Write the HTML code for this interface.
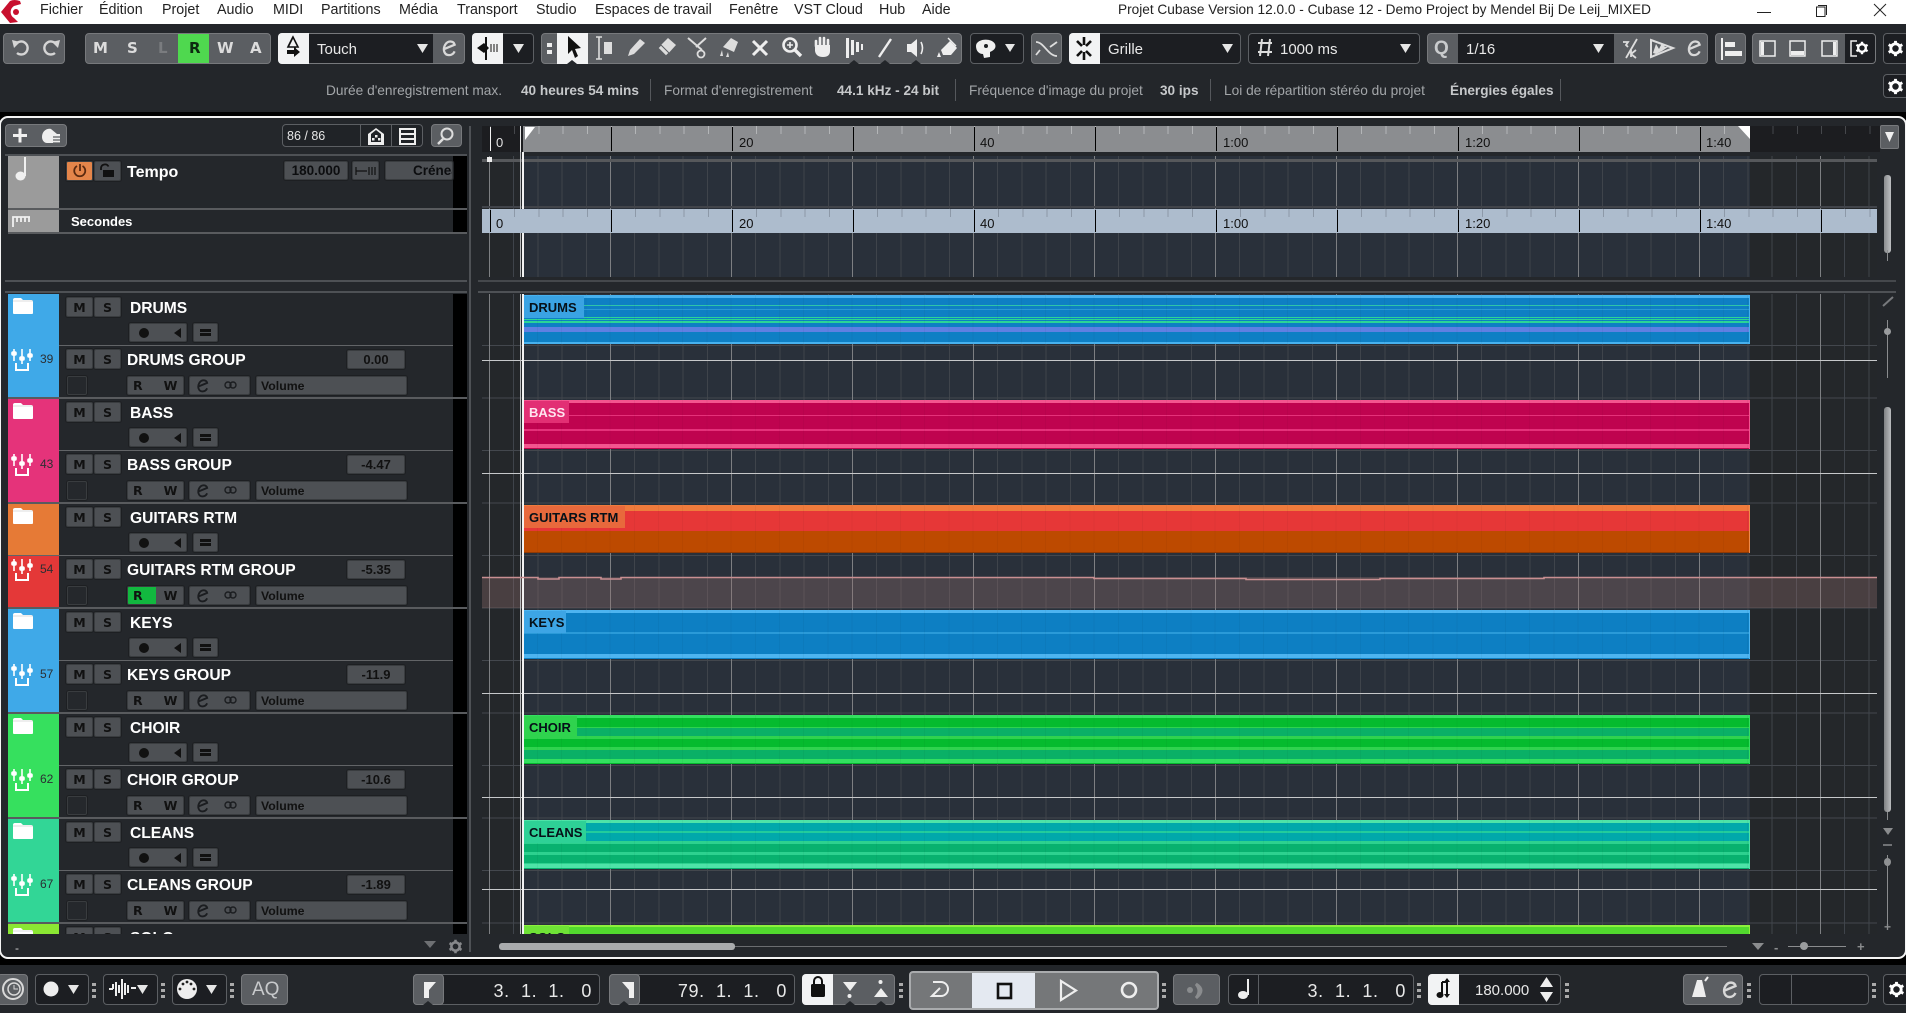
<!DOCTYPE html>
<html lang="fr"><head><meta charset="utf-8"><title>Cubase 12</title>
<style>
*{box-sizing:border-box}
html,body{margin:0;padding:0;width:1906px;height:1013px;overflow:hidden;background:#000;font-family:"Liberation Sans",sans-serif}
.a,.t,.b,.d,.w,.g{position:absolute}
.t{white-space:nowrap;line-height:1}
.d{background:#1c1e22;border:1px solid #5c5f63;border-radius:4px}
.w{background:#5b5e62;border:1px solid #77797c;border-radius:4px}
.g{width:4px;height:3px;background:#aaa;box-shadow:0 6px #aaa,0 12px #aaa;top:983px}
.b{background:#4d5054;border:1px solid #393c3f;box-shadow:0 0 0 1px #1d1f22;border-radius:2px;color:#111;font-weight:700;display:flex;align-items:center;justify-content:center;font-size:12.3px}
.k{font-family:"DejaVu Sans",sans-serif;font-size:12.5px}
.mn{top:3px;font-size:14.3px;color:#222}
.tb{top:42px;font-size:15px;color:#e8e8e8}
.ms{top:41px;font-family:"DejaVu Sans",sans-serif;font-size:15px;font-weight:700;color:#dcdcdc}
.info{top:84px;font-size:13.7px;color:#a3a6a9}
.infb{top:84px;font-size:13.6px;color:#c6c8ca;font-weight:700}
.div{top:79px;width:1px;height:22px;background:#55585c}
.tr{position:absolute;left:0;width:470px;height:105px}
.st{position:absolute;left:8px;top:0;width:51px;height:103px}
.bk{position:absolute;left:453px;top:0;width:14px;height:103px;background:#000}
.l1{position:absolute;left:59px;top:51px;width:394px;height:1px;background:#626467}
.l2{position:absolute;left:8px;top:103px;width:459px;height:2px;background:#595b5e}
.nm{position:absolute;color:#fff;font-weight:700;font-size:15.6px;line-height:1;white-space:nowrap}
.n1{left:130px;top:7px}.n2{left:127px;top:59px}
.num{position:absolute;left:40px;top:59px;font-size:12px;line-height:1;color:#2c2f33}
.f{position:absolute;left:12px;top:2px;width:22px;height:20px}
.mx{position:absolute;left:10px;top:53px;width:24px;height:25px}
.rw{justify-content:flex-start;padding-left:5px;gap:21px}
.rc{justify-content:flex-start;padding-left:9px;gap:21px}
.rc span:first-child{width:10px;height:10px;border-radius:50%;background:#111}
.rc span:last-child{width:0;height:0;border:5px solid transparent;border-right:7px solid #111;margin-left:-1px}
.eq span{width:11px;height:7px;border-top:3px solid #111;border-bottom:3px solid #111}
.clip{position:absolute;left:523px;width:1227px;height:49px;overflow:hidden}
.clip i{position:absolute;left:14.4px;top:0;right:0;bottom:0;background:repeating-linear-gradient(90deg,rgba(0,0,0,.04) 0 1px,transparent 1px 24.2px)}
.clip b{position:absolute;left:0;top:1px;height:22px;padding-left:6px;font-size:13px;line-height:24px;color:#061018;white-space:nowrap}
.clip u{position:absolute;right:0;top:0;width:1px;height:100%}
.loc{font-size:18px;letter-spacing:.6px;color:#e8e8e8;white-space:pre;text-align:right}
svg.ov{position:absolute;left:0;top:0;z-index:5;pointer-events:none}
</style></head><body>

<svg width="0" height="0" style="position:absolute"><defs>
<symbol id="fold" viewBox="0 0 22 20"><path d="M1 4 Q1 2 3 2H9L11 4H19Q21 4 21 6V17Q21 18 20 18H2Q1 18 1 17Z" fill="#fff"/><path d="M1 5H21" stroke="#bbb" stroke-width=".6"/></symbol>
<symbol id="mix" viewBox="0 0 24 25"><g stroke="#fff" stroke-width="1.6" fill="#fff"><path d="M4 2V14M12 2V17M20 2V14" fill="none"/><rect x="2" y="5" width="4" height="3" rx="1"/><rect x="10" y="10" width="4" height="3" rx="1"/><rect x="18" y="7" width="4" height="3" rx="1"/><path d="M6 16V23H18V16" fill="none" stroke-width="2"/></g></symbol>
<symbol id="eic" viewBox="0 0 16 18"><path d="M2 10 L14 5 C13 1 7 0 4 5 C1 10 3 16 8 16 C11 16 13 14 14 12" fill="none" stroke="#d8d8d8" stroke-width="2.4"/></symbol>
<symbol id="eid" viewBox="0 0 16 18"><path d="M2 10 L14 5 C13 1 7 0 4 5 C1 10 3 16 8 16 C11 16 13 14 14 12" fill="none" stroke="#1b1d20" stroke-width="2.4"/></symbol>
<symbol id="gear" viewBox="0 0 20 20"><circle cx="10" cy="10" r="5.5" fill="none" stroke="#fff" stroke-width="3.4"/><path d="M10 1V5M10 15V19M2 5.5 5.5 7.5M14.5 12.5 18 14.5M2 14.5 5.5 12.5M14.5 7.5 18 5.5" stroke="#fff" stroke-width="3.4"/></symbol>
</defs></svg>

<!-- title bar -->
<div class="a" style="left:0;top:0;width:1906px;height:24px;background:#fff"></div>
<div class="t mn" style="left:40px">Fichier</div>
<div class="t mn" style="left:99px">Édition</div>
<div class="t mn" style="left:162px">Projet</div>
<div class="t mn" style="left:217px">Audio</div>
<div class="t mn" style="left:273px">MIDI</div>
<div class="t mn" style="left:321px">Partitions</div>
<div class="t mn" style="left:399px">Média</div>
<div class="t mn" style="left:457px">Transport</div>
<div class="t mn" style="left:536px">Studio</div>
<div class="t mn" style="left:595px">Espaces de travail</div>
<div class="t mn" style="left:729px">Fenêtre</div>
<div class="t mn" style="left:794px">VST Cloud</div>
<div class="t mn" style="left:879px">Hub</div>
<div class="t mn" style="left:922px">Aide</div>
<div class="t" style="left:1118px;top:3px;font-size:13.65px;color:#222">Projet Cubase Version 12.0.0 - Cubase 12 - Demo Project by Mendel Bij De Leij_MIXED</div>

<!-- top toolbar -->
<div class="a" style="left:0;top:24px;width:1906px;height:88px;background:#23262a"></div>
<div class="w" style="left:3px;top:33px;width:62px;height:31px"></div>
<div class="w" style="left:85px;top:33px;width:186px;height:31px"></div>
<div class="a" style="left:178px;top:34px;width:31px;height:29px;background:#4fd84f"></div>
<div class="t ms" style="left:93px">M</div>
<div class="t ms" style="left:127px">S</div>
<div class="t ms" style="left:158px;color:#7a7c7f">L</div>
<div class="t ms" style="left:189px;color:#0c2a10">R</div>
<div class="t ms" style="left:217px">W</div>
<div class="t ms" style="left:250px">A</div>

<div class="w" style="left:278px;top:33px;width:187px;height:31px"></div>
<div class="a" style="left:278px;top:33px;width:31px;height:31px;background:#f2f3f4;border-radius:4px 0 0 4px"></div>
<div class="a" style="left:309px;top:34px;width:124px;height:29px;background:#1c1e22"></div>
<div class="t tb" style="left:317px">Touch</div>

<div class="d" style="left:472px;top:33px;width:62px;height:31px"></div>
<div class="a" style="left:472px;top:33px;width:31px;height:31px;background:#f2f3f4;border-radius:4px 0 0 4px"></div>

<div class="w" style="left:541px;top:33px;width:421px;height:31px"></div>
<div class="a" style="left:557px;top:33px;width:31px;height:31px;background:#f2f3f4"></div>

<div class="d" style="left:970px;top:33px;width:54px;height:31px"></div>
<div class="w" style="left:1031px;top:33px;width:31px;height:31px"></div>
<div class="d" style="left:1069px;top:33px;width:172px;height:31px"></div>
<div class="a" style="left:1069px;top:33px;width:31px;height:31px;background:#f2f3f4;border-radius:4px 0 0 4px"></div>
<div class="t tb" style="left:1108px">Grille</div>
<div class="d" style="left:1248px;top:33px;width:172px;height:31px"></div>
<div class="t tb" style="left:1280px">1000 ms</div>
<div class="w" style="left:1427px;top:33px;width:281px;height:31px"></div>
<div class="a" style="left:1458px;top:34px;width:156px;height:29px;background:#1c1e22"></div>
<div class="t" style="left:1434px;top:39px;font-size:19px;font-weight:700;color:#c9cbcd">Q</div>
<div class="t tb" style="left:1466px">1/16</div>
<div class="w" style="left:1715px;top:33px;width:31px;height:31px"></div>
<div class="w" style="left:1752px;top:33px;width:124px;height:31px"></div>
<div class="a" style="left:1845px;top:34px;width:30px;height:29px;background:#1c1e22;border-radius:0 3px 3px 0"></div>
<div class="d" style="left:1883px;top:33px;width:26px;height:31px"></div>
<div class="d" style="left:1883px;top:74px;width:26px;height:24px"></div>

<!-- info line -->
<div class="t info" style="left:326px">Durée d'enregistrement max.</div>
<div class="t infb" style="left:521px">40 heures 54 mins</div>
<div class="a div" style="left:650px"></div>
<div class="t info" style="left:664px">Format d'enregistrement</div>
<div class="t infb" style="left:837px">44.1 kHz - 24 bit</div>
<div class="a div" style="left:955px"></div>
<div class="t info" style="left:969px">Fréquence d'image du projet</div>
<div class="t infb" style="left:1160px">30 ips</div>
<div class="a div" style="left:1210px"></div>
<div class="t info" style="left:1224px">Loi de répartition stéréo du projet</div>
<div class="t infb" style="left:1450px">Énergies égales</div>
<div class="a div" style="left:1560px"></div>

<!-- main panel -->
<div class="a" style="left:-1px;top:116px;width:1908px;height:843px;background:#24272b;border:2px solid #f4f4f4;border-radius:9px"></div>

<!-- left header -->
<div class="w" style="left:5px;top:124px;width:62px;height:23px"></div>
<div class="d" style="left:282px;top:124px;width:141px;height:23px;background:#202327"></div>
<div class="a" style="left:360px;top:125px;width:1px;height:21px;background:#5c5f63"></div>
<div class="a" style="left:391px;top:125px;width:1px;height:21px;background:#5c5f63"></div>
<div class="t" style="left:287px;top:130px;font-size:12.5px;color:#e6e6e6">86 / 86</div>
<div class="w" style="left:431px;top:124px;width:31px;height:23px"></div>
<div class="a" style="left:5px;top:154px;width:462px;height:2px;background:#4e5155"></div>
<div class="a" style="left:469px;top:126px;width:2px;height:826px;background:#4e5155"></div>

<!-- tempo rows -->
<div class="a" style="left:8px;top:156px;width:51px;height:52px;background:#9b9b9b"></div>
<div class="a" style="left:8px;top:210px;width:51px;height:23px;background:#9b9b9b"></div>
<div class="a" style="left:453px;top:156px;width:14px;height:52px;background:#000"></div>
<div class="a" style="left:453px;top:210px;width:14px;height:22px;background:#000"></div>
<div class="a" style="left:8px;top:208px;width:459px;height:2px;background:#595b5e"></div>
<div class="a" style="left:8px;top:232px;width:459px;height:2px;background:#595b5e"></div>
<div class="b" style="left:66px;top:161px;width:27px;height:20px;background:#e4854a"></div>
<div class="b" style="left:94px;top:161px;width:27px;height:20px"></div>
<div class="t" style="left:127px;top:165px;font-size:16px;font-weight:700;color:#fff">Tempo</div>
<div class="b" style="left:284px;top:161px;width:64px;height:19px;font-size:13.5px;color:#0c0d0f">180.000</div>
<div class="b" style="left:352px;top:161px;width:27px;height:19px"></div>
<div class="b" style="left:385px;top:161px;width:68px;height:19px;overflow:hidden;justify-content:flex-start;padding-left:27px;font-size:13.5px;color:#0c0d0f">Créneau</div>
<div class="t" style="left:71px;top:215px;font-size:13px;font-weight:700;color:#fff">Secondes</div>
<div class="a" style="left:5px;top:280px;width:462px;height:2px;background:#4e5155"></div>
<div class="a" style="left:5px;top:291px;width:462px;height:2px;background:#4e5155"></div>
<div class="a" style="left:478px;top:280px;width:1418px;height:2px;background:#45484c"></div>
<div class="a" style="left:478px;top:291px;width:1418px;height:2px;background:#4e5155"></div>

<!-- track list -->
<div class="a" style="left:0;top:294px;width:470px;height:640px;overflow:hidden">
<div class="tr" style="top:0"><div class="st" style="background:#3fa9e8"></div><div class="bk"></div><div class="l1"></div><div class="l2"></div>
<svg class="f"><use href="#fold"/></svg><svg class="mx"><use href="#mix"/></svg><div class="num">39</div>
<div class="b k" style="left:66px;top:3px;width:27px;height:20px">M</div><div class="b k" style="left:94px;top:3px;width:27px;height:20px">S</div>
<div class="nm n1">DRUMS</div>
<div class="b rc" style="left:129px;top:29px;width:58px;height:19px"><span></span><span></span></div>
<div class="b eq" style="left:193px;top:29px;width:25px;height:19px"><span></span></div>
<div class="b k" style="left:66px;top:55px;width:27px;height:20px">M</div><div class="b k" style="left:94px;top:55px;width:27px;height:20px">S</div>
<div class="nm n2">DRUMS GROUP</div>
<div class="b" style="left:347px;top:56px;width:58px;height:19px;font-size:13px">0.00</div>
<div class="b" style="left:67px;top:82px;width:20px;height:19px;background:#25282c"></div>
<div class="b k rw" style="left:127px;top:82px;width:57px;height:19px">R<span>W</span></div>
<div class="b" style="left:189px;top:82px;width:61px;height:19px"></div>
<div class="b" style="left:256px;top:82px;width:151px;height:19px;justify-content:flex-start;padding-left:4px">Volume</div>
</div>

<div class="tr" style="top:105px"><div class="st" style="background:#e5337a"></div><div class="bk"></div><div class="l1"></div><div class="l2"></div>
<svg class="f"><use href="#fold"/></svg><svg class="mx"><use href="#mix"/></svg><div class="num">43</div>
<div class="b k" style="left:66px;top:3px;width:27px;height:20px">M</div><div class="b k" style="left:94px;top:3px;width:27px;height:20px">S</div>
<div class="nm n1">BASS</div>
<div class="b rc" style="left:129px;top:29px;width:58px;height:19px"><span></span><span></span></div>
<div class="b eq" style="left:193px;top:29px;width:25px;height:19px"><span></span></div>
<div class="b k" style="left:66px;top:55px;width:27px;height:20px">M</div><div class="b k" style="left:94px;top:55px;width:27px;height:20px">S</div>
<div class="nm n2">BASS GROUP</div>
<div class="b" style="left:347px;top:56px;width:58px;height:19px;font-size:13px">-4.47</div>
<div class="b" style="left:67px;top:82px;width:20px;height:19px;background:#25282c"></div>
<div class="b k rw" style="left:127px;top:82px;width:57px;height:19px">R<span>W</span></div>
<div class="b" style="left:189px;top:82px;width:61px;height:19px"></div>
<div class="b" style="left:256px;top:82px;width:151px;height:19px;justify-content:flex-start;padding-left:4px">Volume</div>
</div>

<div class="tr" style="top:210px"><div class="st" style="background:linear-gradient(#e67a36 0 51px,#e43838 51px)"></div><div class="bk"></div><div class="l1" style="left:8px;width:445px"></div><div class="l2"></div>
<svg class="f"><use href="#fold"/></svg><svg class="mx"><use href="#mix"/></svg><div class="num">54</div>
<div class="b k" style="left:66px;top:3px;width:27px;height:20px">M</div><div class="b k" style="left:94px;top:3px;width:27px;height:20px">S</div>
<div class="nm n1">GUITARS RTM</div>
<div class="b rc" style="left:129px;top:29px;width:58px;height:19px"><span></span><span></span></div>
<div class="b eq" style="left:193px;top:29px;width:25px;height:19px"><span></span></div>
<div class="b k" style="left:66px;top:55px;width:27px;height:20px">M</div><div class="b k" style="left:94px;top:55px;width:27px;height:20px">S</div>
<div class="nm n2">GUITARS RTM GROUP</div>
<div class="b" style="left:347px;top:56px;width:58px;height:19px;font-size:13px">-5.35</div>
<div class="b" style="left:67px;top:82px;width:20px;height:19px;background:#25282c"></div>
<div class="b k rw" style="left:127px;top:82px;width:57px;height:19px;background:linear-gradient(90deg,#12b83f 0 28px,#4d5054 28px)">R<span>W</span></div>
<div class="b" style="left:189px;top:82px;width:61px;height:19px"></div>
<div class="b" style="left:256px;top:82px;width:151px;height:19px;justify-content:flex-start;padding-left:4px">Volume</div>
</div>

<div class="tr" style="top:315px"><div class="st" style="background:#3fa9e8"></div><div class="bk"></div><div class="l1"></div><div class="l2"></div>
<svg class="f"><use href="#fold"/></svg><svg class="mx"><use href="#mix"/></svg><div class="num">57</div>
<div class="b k" style="left:66px;top:3px;width:27px;height:20px">M</div><div class="b k" style="left:94px;top:3px;width:27px;height:20px">S</div>
<div class="nm n1">KEYS</div>
<div class="b rc" style="left:129px;top:29px;width:58px;height:19px"><span></span><span></span></div>
<div class="b eq" style="left:193px;top:29px;width:25px;height:19px"><span></span></div>
<div class="b k" style="left:66px;top:55px;width:27px;height:20px">M</div><div class="b k" style="left:94px;top:55px;width:27px;height:20px">S</div>
<div class="nm n2">KEYS GROUP</div>
<div class="b" style="left:347px;top:56px;width:58px;height:19px;font-size:13px">-11.9</div>
<div class="b" style="left:67px;top:82px;width:20px;height:19px;background:#25282c"></div>
<div class="b k rw" style="left:127px;top:82px;width:57px;height:19px">R<span>W</span></div>
<div class="b" style="left:189px;top:82px;width:61px;height:19px"></div>
<div class="b" style="left:256px;top:82px;width:151px;height:19px;justify-content:flex-start;padding-left:4px">Volume</div>
</div>

<div class="tr" style="top:420px"><div class="st" style="background:#36e05e"></div><div class="bk"></div><div class="l1"></div><div class="l2"></div>
<svg class="f"><use href="#fold"/></svg><svg class="mx"><use href="#mix"/></svg><div class="num">62</div>
<div class="b k" style="left:66px;top:3px;width:27px;height:20px">M</div><div class="b k" style="left:94px;top:3px;width:27px;height:20px">S</div>
<div class="nm n1">CHOIR</div>
<div class="b rc" style="left:129px;top:29px;width:58px;height:19px"><span></span><span></span></div>
<div class="b eq" style="left:193px;top:29px;width:25px;height:19px"><span></span></div>
<div class="b k" style="left:66px;top:55px;width:27px;height:20px">M</div><div class="b k" style="left:94px;top:55px;width:27px;height:20px">S</div>
<div class="nm n2">CHOIR GROUP</div>
<div class="b" style="left:347px;top:56px;width:58px;height:19px;font-size:13px">-10.6</div>
<div class="b" style="left:67px;top:82px;width:20px;height:19px;background:#25282c"></div>
<div class="b k rw" style="left:127px;top:82px;width:57px;height:19px">R<span>W</span></div>
<div class="b" style="left:189px;top:82px;width:61px;height:19px"></div>
<div class="b" style="left:256px;top:82px;width:151px;height:19px;justify-content:flex-start;padding-left:4px">Volume</div>
</div>

<div class="tr" style="top:525px"><div class="st" style="background:#32d696"></div><div class="bk"></div><div class="l1"></div><div class="l2"></div>
<svg class="f"><use href="#fold"/></svg><svg class="mx"><use href="#mix"/></svg><div class="num">67</div>
<div class="b k" style="left:66px;top:3px;width:27px;height:20px">M</div><div class="b k" style="left:94px;top:3px;width:27px;height:20px">S</div>
<div class="nm n1">CLEANS</div>
<div class="b rc" style="left:129px;top:29px;width:58px;height:19px"><span></span><span></span></div>
<div class="b eq" style="left:193px;top:29px;width:25px;height:19px"><span></span></div>
<div class="b k" style="left:66px;top:55px;width:27px;height:20px">M</div><div class="b k" style="left:94px;top:55px;width:27px;height:20px">S</div>
<div class="nm n2">CLEANS GROUP</div>
<div class="b" style="left:347px;top:56px;width:58px;height:19px;font-size:13px">-1.89</div>
<div class="b" style="left:67px;top:82px;width:20px;height:19px;background:#25282c"></div>
<div class="b k rw" style="left:127px;top:82px;width:57px;height:19px">R<span>W</span></div>
<div class="b" style="left:189px;top:82px;width:61px;height:19px"></div>
<div class="b" style="left:256px;top:82px;width:151px;height:19px;justify-content:flex-start;padding-left:4px">Volume</div>
</div>

<div class="tr" style="top:630px"><div class="st" style="background:#8be733"></div><div class="bk"></div>
<svg class="f"><use href="#fold"/></svg>
<div class="b k" style="left:66px;top:3px;width:27px;height:20px">M</div><div class="b k" style="left:94px;top:3px;width:27px;height:20px">S</div>
<div class="nm n1">SOLO</div>
</div>
</div>
<div class="t" style="left:15px;top:942px;font-size:12px;color:#cfcfcf">-</div>

<!-- arrange upper -->
<div class="a" style="left:482px;top:156px;width:1395px;height:121px;background:#24272a;overflow:hidden">
  <div class="a" style="left:41px;top:0;width:1227px;height:121px;background:#29303a"></div>
  <div class="a" style="left:7px;top:0;width:1388px;height:121px;background:repeating-linear-gradient(90deg,#3f444b 0 1px,transparent 1px 24.2px)"></div>
  <div class="a" style="left:7px;top:0;width:1388px;height:121px;background:repeating-linear-gradient(90deg,#7d7f82 0 1px,transparent 1px 121px)"></div>
  <div class="a" style="left:0;top:3px;width:1395px;height:3px;background:#56585b"></div>
  <div class="a" style="left:0;top:50px;width:1395px;height:2px;background:#41444a"></div>
</div>
<div class="a" style="left:520px;top:152px;width:1px;height:125px;background:#b9bbbd"></div>
<div class="a" style="left:522px;top:152px;width:2px;height:125px;background:#f4f4f4"></div>
<div class="a" style="left:487px;top:157px;width:5px;height:5px;background:#eee"></div>

<!-- ruler top -->
<div class="a" style="left:482px;top:126px;width:1398px;height:26px;background:#1c1d20;overflow:hidden">
  <div class="a" style="left:8px;top:0;width:1390px;height:8px;background:repeating-linear-gradient(90deg,#45474b 0 1px,transparent 1px 24.2px)"></div>
  <div class="a" style="left:8px;top:1px;width:1390px;height:24px;background:repeating-linear-gradient(90deg,#f2f2f2 0 1px,transparent 1px 242px)"></div>
  <div class="a" style="left:41px;top:0;width:1227px;height:26px;background:#8b8d90;overflow:hidden">
    <div class="a" style="left:-33px;top:0;width:1300px;height:8px;background:repeating-linear-gradient(90deg,#b3b5b7 0 1px,transparent 1px 24.2px)"></div>
    <div class="a" style="left:-33px;top:1px;width:1300px;height:24px;background:repeating-linear-gradient(90deg,#000 0 1px,transparent 1px 121px)"></div>
  </div>
</div>
<div class="a" style="left:520px;top:126px;width:1px;height:26px;background:#e8e8e8"></div>
<div class="t" style="left:496px;top:136px;font-size:13px;color:#e2e2e2">0</div>
<div class="t" style="left:739px;top:136px;font-size:13px;color:#111">20</div>
<div class="t" style="left:980px;top:136px;font-size:13px;color:#111">40</div>
<div class="t" style="left:1223px;top:136px;font-size:13px;color:#111">1:00</div>
<div class="t" style="left:1465px;top:136px;font-size:13px;color:#111">1:20</div>
<div class="t" style="left:1706px;top:136px;font-size:13px;color:#111">1:40</div>
<div class="a" style="left:1880px;top:125px;width:19px;height:24px;background:#5b5e62;border:1px solid #77797c;border-radius:2px"></div>

<!-- ruler secondes -->
<div class="a" style="left:482px;top:209px;width:1395px;height:24px;background:#adbccd;overflow:hidden">
  <div class="a" style="left:8px;top:0;width:1387px;height:8px;background:repeating-linear-gradient(90deg,#8d99a8 0 1px,transparent 1px 24.2px)"></div>
  <div class="a" style="left:8px;top:1px;width:1387px;height:22px;background:repeating-linear-gradient(90deg,#000 0 1px,transparent 1px 121px)"></div>
</div>
<div class="t" style="left:496px;top:217px;font-size:13px;color:#111">0</div>
<div class="t" style="left:739px;top:217px;font-size:13px;color:#111">20</div>
<div class="t" style="left:980px;top:217px;font-size:13px;color:#111">40</div>
<div class="t" style="left:1223px;top:217px;font-size:13px;color:#111">1:00</div>
<div class="t" style="left:1465px;top:217px;font-size:13px;color:#111">1:20</div>
<div class="t" style="left:1706px;top:217px;font-size:13px;color:#111">1:40</div>

<!-- arrange lower -->
<div class="a" style="left:482px;top:294px;width:1395px;height:640px;background:#24272a;overflow:hidden">
  <div class="a" style="left:41px;top:0;width:1227px;height:640px;background:#29303a"></div>
  <div class="a" style="left:7px;top:0;width:1388px;height:640px;background:repeating-linear-gradient(90deg,#3f444b 0 1px,transparent 1px 24.2px)"></div>
  <div class="a" style="left:0;top:51px;width:1395px;height:590px;background:repeating-linear-gradient(180deg,#43474d 0 1px,transparent 1px 52.5px)"></div>
  <div class="a" style="left:7px;top:0;width:1388px;height:640px;background:repeating-linear-gradient(90deg,#7d7f82 0 1px,transparent 1px 121px)"></div>
  <div class="a" style="left:0;top:66px;width:1395px;height:1px;background:#c6c8ca"></div>
  <div class="a" style="left:0;top:179px;width:1395px;height:1px;background:#c6c8ca"></div>
  <div class="a" style="left:0;top:399px;width:1395px;height:1px;background:#c6c8ca"></div>
  <div class="a" style="left:0;top:503px;width:1395px;height:1px;background:#c6c8ca"></div>
  <div class="a" style="left:0;top:595px;width:1395px;height:1px;background:#c6c8ca"></div>
  <div class="a" style="left:0;top:283px;width:1395px;height:31px;background:rgba(150,112,112,.33)"></div>
</div>
<div class="a" style="left:520px;top:294px;width:1px;height:640px;background:#b9bbbd"></div>

<!-- clips -->
<div class="clip" style="top:295px;background:linear-gradient(#47b1ee 0 3px,#0e7fc4 3px 10px,#2fc4a8 10px 11px,#0e7fc4 11px 14px,#2b98d6 14px 15px,#0e7fc4 15px 22px,#2bd596 22px 23px,#0e7fc4 23px 24px,#2bd596 24px 25px,#0e7fc4 25px 26px,#2bd596 26px 28px,#0e7fc4 28px 32px,#5f80e2 32px 37px,#0e7fc4 37px 47px,#47b1ee 47px)"><i></i><b style="background:#3aa3e3;width:61px">DRUMS</b><u style="background:#47b1ee"></u></div>
<div class="clip" style="top:400px;background:linear-gradient(#f3558f 0 3px,#bf034f 3px 15px,#e5317a 15px 16px,#bf034f 16px 29px,#e5317a 29px 31px,#bf034f 31px 44px,#f3558f 44px 48px,#bf034f 48px)"><i></i><b style="background:#e22f74;color:#ffe6f0;width:46px">BASS</b><u style="background:#f3558f"></u></div>
<div class="clip" style="top:505px;height:48px;background:linear-gradient(#ef7b3c 0 6px,#e63737 6px 26px,#bd4a00 26px 47px,#8f3a05 47px)"><i></i><b style="background:#e8693c;width:102px">GUITARS RTM</b><u style="background:#f08a4c"></u></div>
<div class="clip" style="top:610px;background:linear-gradient(#4db4f0 0 3px,#0d7fc3 3px 22px,#2a9ad8 22px 24px,#0d7fc3 24px 44px,#4db4f0 44px 48px,#0d7fc3 48px)"><i></i><b style="background:#3da5e5;width:43px">KEYS</b><u style="background:#4db4f0"></u></div>
<div class="clip" style="top:715px;background:linear-gradient(#33e060 0 3px,#05bb2e 3px 12px,#2fd34e 12px 13px,#0ab066 13px 21px,#2fd34e 21px 24px,#05bb2e 24px 32px,#2fd34e 32px 35px,#0ab066 35px 44px,#33e060 44px 48px,#05bb2e 48px)"><i></i><b style="background:#2fd34e;width:54px">CHOIR</b><u style="background:#33e060"></u></div>
<div class="clip" style="top:820px;background:linear-gradient(#4ee3a8 0 3px,#01a8ab 3px 11px,#22cc9c 11px 13px,#01a8ab 13px 21px,#2dd18f 21px 24px,#08b16f 24px 32px,#2dd18f 32px 35px,#08b16f 35px 43px,#2dd18f 43px 44px,#4ee3a8 44px 48px,#08b16f 48px)"><i></i><b style="background:#2ed196;width:63px">CLEANS</b><u style="background:#4ee3a8"></u></div>
<div class="clip" style="top:925px;height:9px;background:linear-gradient(#8cf03c 0 2px,#52d92e 2px)"><b style="background:#6fe236;width:46px">SOLO</b><u style="background:#8cf03c"></u></div>
<div class="a" style="left:522px;top:294px;width:2px;height:640px;background:#f4f4f4"></div>

<!-- scrollbars -->
<div class="a" style="left:499px;top:946px;width:1228px;height:1px;background:#6b6d70"></div>
<div class="a" style="left:499px;top:943px;width:236px;height:7px;background:#a9abad;border-radius:3px"></div>
<div class="a" style="left:1884px;top:175px;width:7px;height:78px;background:linear-gradient(90deg,#8a8c8e,#bdbfc1);border-radius:3px"></div>
<div class="a" style="left:1887px;top:250px;width:1px;height:11px;background:#8a8c8e"></div>
<div class="a" style="left:1887px;top:320px;width:1px;height:58px;background:#8a8c8e"></div>
<div class="a" style="left:1884px;top:328px;width:7px;height:7px;background:#9a9c9e;border-radius:50%"></div>
<div class="a" style="left:1884px;top:407px;width:7px;height:405px;background:linear-gradient(90deg,#7f8183,#b9bbbd);border-radius:3px"></div>
<div class="a" style="left:1887px;top:812px;width:1px;height:8px;background:#8a8c8e"></div>
<div class="a" style="left:1887px;top:855px;width:1px;height:70px;background:#8a8c8e"></div>
<div class="a" style="left:1884px;top:858px;width:7px;height:8px;background:#8f9193;border-radius:50%"></div>
<div class="a" style="left:1788px;top:946px;width:58px;height:1px;background:#8a8c8e"></div>
<div class="a" style="left:1800px;top:942px;width:8px;height:8px;background:#9a9c9e;border-radius:50%"></div>
<div class="t" style="left:1774px;top:941px;font-size:13px;font-weight:700;color:#8a8c8e">-</div>
<div class="t" style="left:1857px;top:940px;font-size:13px;font-weight:700;color:#8a8c8e">+</div>
<div class="t" style="left:1884px;top:921px;font-size:12px;font-weight:700;color:#8a8c8e">+</div>

<!-- bottom toolbar -->
<div class="a" style="left:0;top:965px;width:1906px;height:48px;background:#23262a"></div>
<div class="w" style="left:-3px;top:974px;width:31px;height:31px"></div>
<div class="d" style="left:35px;top:974px;width:54px;height:31px"></div><div class="g" style="left:92px"></div>
<div class="d" style="left:103px;top:974px;width:55px;height:31px"></div><div class="g" style="left:161px"></div>
<div class="d" style="left:172px;top:974px;width:55px;height:31px"></div><div class="g" style="left:230px"></div>
<div class="w" style="left:241px;top:974px;width:47px;height:31px"></div>
<div class="t" style="left:252px;top:980px;font-size:19px;color:#c8cacc">AQ</div>

<div class="d" style="left:413px;top:974px;width:187px;height:31px"></div>
<div class="w" style="left:413px;top:974px;width:31px;height:31px"></div>
<div class="t loc" style="left:444px;top:982px;width:148px">3.  1.  1.   0</div>
<div class="d" style="left:609px;top:974px;width:186px;height:31px"></div>
<div class="w" style="left:609px;top:974px;width:31px;height:31px"></div>
<div class="t loc" style="left:640px;top:982px;width:147px">79.  1.  1.   0</div>
<div class="w" style="left:802px;top:974px;width:93px;height:31px"></div>
<div class="a" style="left:802px;top:974px;width:31px;height:31px;background:#f2f3f4;border-radius:4px 0 0 4px"></div>
<div class="g" style="left:899px"></div>
<div class="a" style="left:909px;top:971px;width:250px;height:39px;background:#757779;border:2px solid #a9abad;border-radius:4px"></div>
<div class="a" style="left:972px;top:973px;width:63px;height:35px;background:#e4e9f1"></div>
<div class="g" style="left:1162px"></div>
<div class="w" style="left:1173px;top:974px;width:47px;height:31px"></div>
<div class="d" style="left:1228px;top:974px;width:186px;height:31px"></div>
<div class="a" style="left:1258px;top:975px;width:1px;height:29px;background:#5c5f63"></div>
<div class="t loc" style="left:1259px;top:982px;width:147px">3.  1.  1.   0</div>
<div class="g" style="left:1417px"></div>
<div class="d" style="left:1428px;top:974px;width:133px;height:31px"></div>
<div class="a" style="left:1428px;top:974px;width:31px;height:31px;background:#f2f3f4;border-radius:4px 0 0 4px"></div>
<div class="t" style="left:1475px;top:983px;font-size:15px;color:#e8e8e8">180.000</div>
<div class="g" style="left:1565px"></div>
<div class="w" style="left:1683px;top:974px;width:60px;height:31px"></div>
<div class="g" style="left:1747px"></div>
<div class="d" style="left:1759px;top:974px;width:110px;height:31px"></div>
<div class="a" style="left:1791px;top:975px;width:1px;height:29px;background:#5c5f63"></div>
<div class="g" style="left:1872px"></div>
<div class="d" style="left:1883px;top:974px;width:26px;height:31px"></div>

<!-- icon overlay -->
<svg class="ov" width="1906" height="1013" viewBox="0 0 1906 1013">
<!-- logo -->
<path d="M1 12 L10 1 Q14 -1 20 1 L21 4 L14 6 A7 7 0 0 0 14 18 L18 22 L10 23Z" fill="#c8102e"/><circle cx="16" cy="12" r="3" fill="#c8102e"/>
<!-- window controls -->
<path d="M1757 12.5H1771" stroke="#222" stroke-width="1"/>
<path d="M1818 5.5h8.5v9.5M1816.5 7h8.5v9.5h-8.5z" fill="none" stroke="#222"/>
<path d="M1874 4 1886 16M1886 4 1874 16" stroke="#222"/>
<!-- undo/redo -->
<path d="M16 44 A6.5 6.5 0 1 1 17 53" fill="none" stroke="#d5d5d5" stroke-width="2.4"/><path d="M12 40 L20 42 L14 48Z" fill="#d5d5d5"/>
<path d="M56 44 A6.5 6.5 0 1 0 55 53" fill="none" stroke="#d5d5d5" stroke-width="2.4"/><path d="M60 40 L52 42 L58 48Z" fill="#d5d5d5"/>
<!-- touch -->
<path d="M293 37 L288 47 H298Z" fill="none" stroke="#111" stroke-width="1.6"/><path d="M288 47 L293 37M295 47 V53" stroke="#111" stroke-width="1.6"/><path d="M287 50 h7 v-3 l6 5 l-6 5 v-3 h-7z" fill="#111"/>
<use href="#eic" x="441" y="40" width="16" height="17"/>
<!-- insert split -->
<path d="M477 48 L484 43 V53Z M489 48 L484 43 V53Z" fill="#111"/><path d="M486 37V60" stroke="#111" stroke-width="2"/><path d="M491 44v8M494 44v8M497 44v8" stroke="#111"/>
<path d="M513 44H524L518.5 53Z" fill="#e6e6e6"/><path d="M417 44H428L422.5 53Z" fill="#e6e6e6"/>
<!-- tool dots -->
<rect x="547" y="43" width="5" height="4" fill="#eee"/><rect x="547" y="50" width="5" height="4" fill="#eee"/>
<!-- arrow -->
<path d="M568 36 L568 54 L572 50 L575 58 L578 56 L575 49 L581 48Z" fill="#111"/>
<!-- range -->
<path d="M596 37h6M596 59h6M599 37V59" stroke="#ddd" stroke-width="1.6"/><rect x="604" y="42" width="8" height="12" fill="#ddd"/>
<!-- pencil -->
<path d="M628 56 L630 50 L640 39 L645 43 L634 54Z" fill="#ddd"/>
<!-- eraser -->
<path d="M658 48 L668 38 L676 45 L666 56Z" fill="#ddd"/><path d="M658 48 L666 56 L669 53 L661 45Z" fill="none" stroke="#5b5e62"/>
<!-- scissors -->
<path d="M688 38 L702 50M706 38 L696 47" stroke="#ddd" stroke-width="2"/><circle cx="701" cy="54" r="3.5" fill="none" stroke="#ddd" stroke-width="1.8"/>
<!-- glue -->
<path d="M723 47 L731 38 L738 42 L734 52Z" fill="#ddd"/><path d="M722 50l-2 6h3zM728 52l-2 5h3z" fill="#ddd"/>
<!-- X -->
<path d="M753 41 L767 55M767 41 L753 55" stroke="#eee" stroke-width="3"/>
<!-- zoom -->
<circle cx="790" cy="45" r="6.5" fill="none" stroke="#eee" stroke-width="2.6"/><path d="M787 45h6M790 42v6" stroke="#eee" stroke-width="1.6"/><path d="M795 50 L801 56" stroke="#eee" stroke-width="3.4"/>
<!-- hand -->
<path d="M816 46 V41 M820 46 V38 M824 46 V38 M828 46 V40" stroke="#eee" stroke-width="2.6" stroke-linecap="round"/><path d="M815 45 H830 V51 Q830 57 823 57 Q816 57 815 51Z" fill="#eee"/>
<!-- bars -->
<path d="M846 38h3v20h-3zM851 40h3v15h-3zM856 42h3v10h-3zM861 44h2v6h-2z" fill="#eee"/>
<!-- line -->
<path d="M879 57 L891 39" stroke="#eee" stroke-width="2.4"/>
<!-- speaker -->
<path d="M907 44h4l6-5v18l-6-5h-4z" fill="#eee"/><path d="M921 42 Q924 48 921 54" fill="none" stroke="#eee" stroke-width="1.6"/>
<!-- paint -->
<path d="M941 50 L950 41 L957 48 L951 55 H943Z" fill="#eee"/><path d="M948 38 L956 46" stroke="#eee" stroke-width="1.4"/><path d="M939 52 l-2 5h4z" fill="#eee"/>
<!-- tool notches -->
<path d="M567 64l5-4 5 4zM849 64l5-4 5 4zM880 64l5-4 5 4zM911 64l5-4 5 4z" fill="#23262a"/>
<!-- skull/head -->
<path d="M976 46 C976 39 991 37 995 44 C997 49 992 51 990 52 L990 57 L984 58 L983 54 C979 54 976 51 976 46Z" fill="#f0f0f0"/><circle cx="986" cy="46" r="2" fill="#1c1e22"/>
<path d="M1005 44H1015L1010 52Z" fill="#e6e6e6"/>
<!-- crossfade -->
<path d="M1036 42 C1044 42 1048 56 1057 56 M1036 55 L1040 50 M1057 42 L1050 47" stroke="#ddd" stroke-width="1.8" fill="none"/>
<!-- grille -->
<path d="M1084 37V45M1084 52V60M1077 41L1082 46M1091 41L1086 46M1077 56L1082 51M1091 56L1086 51" stroke="#111" stroke-width="2.6"/>
<path d="M1222 44H1233L1227.5 53Z" fill="#e6e6e6"/>
<path d="M1258 43H1272M1258 52H1272M1262 39L1260 56M1270 39L1268 56" stroke="#ddd" stroke-width="2"/>
<path d="M1400 44H1411L1405.5 53Z" fill="#e6e6e6"/>
<path d="M1593 44H1604L1598.5 53Z" fill="#e6e6e6"/>
<!-- quantize icons -->
<path d="M1623 42h5l-2 3 2 2M1637 39 L1626 58M1631 50v7M1631 54l5-4M1631 54l5 4" stroke="#ddd" stroke-width="1.8" fill="none"/>
<path d="M1651 40 L1673 48 L1651 57Z" fill="none" stroke="#ddd" stroke-width="2"/><path d="M1653 53l3-9 3 5 3-6 3 4 3 0-6 4-6 3z" fill="#ddd"/>
<use href="#eic" x="1686" y="40" width="16" height="17"/>
<!-- align -->
<path d="M1722 38V60" stroke="#eee" stroke-width="2"/><rect x="1725" y="42" width="10" height="5" fill="#eee"/><rect x="1725" y="51" width="17" height="5" fill="#eee"/>
<!-- panels -->
<rect x="1760" y="41" width="15" height="15" fill="none" stroke="#eee" stroke-width="1.5"/><rect x="1761" y="42" width="3" height="13" fill="#eee"/>
<rect x="1790" y="41" width="15" height="15" fill="none" stroke="#eee" stroke-width="1.5"/><rect x="1791" y="51" width="13" height="4" fill="#eee"/>
<rect x="1822" y="41" width="15" height="15" fill="none" stroke="#eee" stroke-width="1.5"/><rect x="1833" y="42" width="3" height="13" fill="#eee"/>
<path d="M1857 41h-6v15h6" fill="none" stroke="#eee" stroke-width="1.5"/><use href="#gear" x="1855" y="41" width="14" height="14"/>
<use href="#gear" x="1887" y="40" width="17" height="17"/>
<use href="#gear" x="1887" y="78" width="17" height="17"/>
<!-- left header icons -->
<path d="M13 135.5H27M20 128.5V142.5" stroke="#f0f0f0" stroke-width="3"/>
<path d="M42 137 C42 131 47 128 51 129 L57 134 H60 V143 H47 C44 143 42 140 42 137Z" fill="#eee"/><path d="M53 137h9M53 140h9M53 143h9" stroke="#5b5e62" stroke-width="1.2"/>
<path d="M368 134 L376 128 L384 134 V145 H368Z" fill="#eee"/><path d="M371 134 L376 130 L381 134 V142 H371Z" fill="#202327"/><rect x="375" y="135" width="2.5" height="2.5" fill="#eee"/><rect x="372" y="138" width="2.5" height="2.5" fill="#eee"/><rect x="378" y="138" width="2.5" height="2.5" fill="#eee"/>
<rect x="400" y="129" width="15" height="15" fill="none" stroke="#eee" stroke-width="2"/><path d="M400 134h15M400 139h15" stroke="#eee" stroke-width="2"/>
<circle cx="447" cy="134" r="5.5" fill="none" stroke="#ddd" stroke-width="2"/><path d="M443 139 L438 144" stroke="#ddd" stroke-width="2.5"/>
<!-- tempo icons -->
<path d="M25 157 V176" stroke="#f0f0f0" stroke-width="2"/><ellipse cx="20.5" cy="176" rx="5" ry="4.5" fill="#f0f0f0"/>
<path d="M13 227V217H30M17 217v5M21 217v5M25 217v5M29 217v5" stroke="#f0f0f0" stroke-width="1.8" fill="none"/>
<path d="M77 166 A5.5 5.5 0 1 0 82.5 166" fill="none" stroke="#5a2a10" stroke-width="1.8"/><path d="M80 164V171" stroke="#5a2a10" stroke-width="1.8"/>
<path d="M101 170V168a4 4 0 0 1 7.5-1.5" fill="none" stroke="#111" stroke-width="1.8"/><rect x="103" y="170" width="11" height="7" fill="#111"/>
<path d="M356 167V175M356 171H367M369 167V175M372 167V175M375 167V175" stroke="#111" stroke-width="1.2"/>
<!-- ruler triangles -->
<path d="M525 127H535L525 140Z" fill="#fff"/>
<path d="M1738 126H1750V139Z" fill="#fff"/>
<path d="M1885 132H1894L1889.5 142Z" fill="#f0f0f0"/>
<!-- automation line -->
<path d="M482 577.5H538V579H559V577.5H601V579H621V577.5H1094V578.5H1246V579.5H1380V578.5H1544V577.5H1877" fill="none" stroke="#c98f92" stroke-width="1.6"/>
<!-- track e/link icons -->
<g fill="none" stroke="#1b1d20" stroke-width="1.4">
<circle cx="228" cy="385" r="3"/><circle cx="233" cy="385" r="3"/>
<circle cx="228" cy="490" r="3"/><circle cx="233" cy="490" r="3"/>
<circle cx="228" cy="595" r="3"/><circle cx="233" cy="595" r="3"/>
<circle cx="228" cy="700" r="3"/><circle cx="233" cy="700" r="3"/>
<circle cx="228" cy="805" r="3"/><circle cx="233" cy="805" r="3"/>
<circle cx="228" cy="910" r="3"/><circle cx="233" cy="910" r="3"/>
</g>
<use href="#eid" x="196" y="379" width="13" height="14"/>
<use href="#eid" x="196" y="484" width="13" height="14"/>
<use href="#eid" x="196" y="589" width="13" height="14"/>
<use href="#eid" x="196" y="694" width="13" height="14"/>
<use href="#eid" x="196" y="799" width="13" height="14"/>
<use href="#eid" x="196" y="904" width="13" height="14"/>
<!-- small grey controls -->
<path d="M424 941H436L430 948Z" fill="#6e7073"/>
<use href="#gear" x="448" y="939" width="15" height="15" opacity=".45"/>
<path d="M1752 943H1764L1758 950Z" fill="#8a8c8e"/>
<path d="M1883 828H1893L1888 835Z" fill="#8a8c8e"/>
<path d="M1883 845h9" stroke="#8a8c8e" stroke-width="1.5"/>
<path d="M1883 306 L1893 297" stroke="#77797c" stroke-width="2"/>
<!-- bottom icons -->
<circle cx="13" cy="989" r="10" fill="none" stroke="#d8d8d8" stroke-width="2"/><circle cx="14" cy="989" r="6" fill="none" stroke="#d8d8d8" stroke-width="1.5"/><path d="M14 985v4h4" stroke="#d8d8d8" fill="none"/>
<circle cx="51" cy="989" r="7.5" fill="#eee"/><path d="M68 985H79L73.5 994Z" fill="#e6e6e6"/>
<path d="M109 989H113M113 989V984M116 982V996M119 985V993M122 979V999M125 983V995M128 985V993M131 988H136" stroke="#eee" stroke-width="2" fill="none"/><path d="M137 985H148L142.5 994Z" fill="#e6e6e6"/>
<circle cx="187" cy="989" r="10" fill="#eee"/><circle cx="180" cy="989" r="1.4" fill="#222"/><circle cx="183" cy="984" r="1.4" fill="#222"/><circle cx="187" cy="982" r="1.4" fill="#222"/><circle cx="191" cy="984" r="1.4" fill="#222"/><circle cx="194" cy="989" r="1.4" fill="#222"/><path d="M206 985H217L211.5 994Z" fill="#e6e6e6"/>
<path d="M424 982H436L429 990V998H424Z" fill="#f0f0f0"/>
<path d="M622 982H634V998H629V990Z" fill="#f0f0f0"/>
<path d="M423 1005l5-4 5 4zM619 1005l5-4 5 4zM845 1005l5-4 5 4zM876 1005l5-4 5 4z" fill="#23262a"/>
<!-- lock -->
<path d="M814 984V981a4 4 0 0 1 8 0V984" fill="none" stroke="#111" stroke-width="2"/><rect x="811" y="984" width="14" height="13" rx="1.5" fill="#111"/>
<path d="M843 982H857L850 991Z" fill="#eee"/><circle cx="849.5" cy="996" r="2" fill="#eee"/>
<path d="M874 997H888L881 988Z" fill="#eee"/><circle cx="880.5" cy="982" r="2" fill="#eee"/>
<!-- transport -->
<path d="M933 982 H941 A7 7 0 0 1 941 996 H932 L940 988" fill="none" stroke="#eee" stroke-width="2"/>
<rect x="998" y="984" width="13" height="14" fill="none" stroke="#111" stroke-width="2.6"/>
<path d="M1061 981 V1000 L1076 990.5Z" fill="none" stroke="#eee" stroke-width="2.2"/>
<circle cx="1129" cy="990" r="7" fill="none" stroke="#eee" stroke-width="2.6"/>
<path d="M1196 984 Q1206 990 1196 998 Q1202 991 1196 984Z" fill="#8a8c8e" stroke="#8a8c8e" stroke-width="3"/><circle cx="1190" cy="990" r="3" fill="#8a8c8e"/>
<path d="M1248 979V995" stroke="#eee" stroke-width="2"/><ellipse cx="1243" cy="995" rx="5" ry="4" fill="#eee"/>
<!-- tempo -->
<path d="M1442 982V994M1447 982V994M1442 982H1447" stroke="#111" stroke-width="2" fill="none"/><ellipse cx="1440" cy="995" rx="3.5" ry="3" fill="#111"/><path d="M1447 978l-3 4h6zM1447 998l-3-4h6z" fill="#111"/>
<path d="M1540 987H1553L1546.5 977Z M1540 992H1553L1546.5 1002Z" fill="#eee"/>
<!-- metronome -->
<path d="M1692 997 L1697 980 H1702 L1706 997Z" fill="#eee"/><path d="M1705 981l3-4" stroke="#eee" stroke-width="2"/>
<use href="#eic" x="1721" y="981" width="17" height="18"/>
<use href="#gear" x="1888" y="981" width="17" height="17"/>
</svg>
</body></html>
